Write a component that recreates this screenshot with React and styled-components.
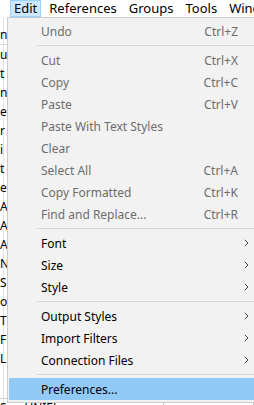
import React from 'react';
import styled, { createGlobalStyle } from 'styled-components';

const GlobalStyle = createGlobalStyle`
  html, body {
    margin: 0;
    padding: 0;
    background: #ffffff;
  }

  body {
    font-family: "Noto Sans", "Noto Sans CJK SC", sans-serif;
    font-size: 12px;
    color: #000000;
  }
`;

const Page = styled.div`
  width: 254px;
  height: 405px;
  overflow: hidden;
  display: flex;
  flex-direction: column;
  background: #ffffff;
`;

const MenuBar = styled.div`
  display: flex;
  align-items: stretch;
  gap: 4px;
  height: 17px;
  padding-left: 10px;
  flex-shrink: 0;
  white-space: nowrap;
  font-size: 13px;
`;

const BarItem = styled.div`
  display: flex;
  align-items: center;
  padding: 0 3px;
  border: 1px solid ${({ active }) => (active ? '#99d1ff' : 'transparent')};
  background: ${({ active }) => (active ? '#cce8ff' : 'transparent')};
  line-height: 15px;
`;

const Workspace = styled.div`
  position: relative;
  flex: 1;
  overflow: hidden;
`;

const BgList = styled.div`
  display: flex;
  flex-direction: column;
  padding-top: 8px;
  border-left: 1px solid #e2e2e2;
  margin-left: 3px;
`;

const BgRow = styled.div`
  height: 19px;
  line-height: 19px;
  margin-left: -4px;
  white-space: nowrap;
  border-bottom: ${({ ruled }) => (ruled ? '1px solid #dadada' : 'none')};
`;

const BgFooter = styled.div`
  display: flex;
  margin-top: 30px;
  border-top: 1px solid #cfcfcf;
  height: 19px;
  line-height: 17px;
  margin-left: -4px;
`;

const FooterCell = styled.div`
  width: ${({ w }) => w}px;
  border-right: 1px solid #bdbdbd;
  white-space: nowrap;
  overflow: hidden;
`;

const Dropdown = styled.div`
  position: absolute;
  top: 0;
  left: 7px;
  width: 270px;
  padding: 2px 1px;
  background: #f2f2f2;
  border: 1px solid #cccccc;
  display: flex;
  flex-direction: column;
`;

const Row = styled.div`
  display: grid;
  grid-template-columns: 1fr auto 11px;
  align-items: center;
  height: 22px;
  padding: 0 30px 0 32px;
  color: ${({ disabled }) => (disabled ? '#6d6d6d' : '#000000')};
  background: ${({ hovered }) => (hovered ? '#91c9f7' : 'transparent')};
  white-space: nowrap;
`;

const Shortcut = styled.span`
  text-align: right;
`;

const Arrow = styled.span`
  display: flex;
  justify-content: flex-end;
  align-items: center;
`;

const Separator = styled.div`
  height: 1px;
  margin: 3px 0 3px 28px;
  background: #d7d7d7;
`;

const Chevron = () => (
  <svg width="5" height="8" viewBox="0 0 5 8">
    <path d="M0.8 0.8 L4 4 L0.8 7.2" fill="none" stroke="#444" strokeWidth="1" />
  </svg>
);

const menu = [
  { label: 'Undo', keys: 'Ctrl+Z', disabled: true },
  'sep',
  { label: 'Cut', keys: 'Ctrl+X', disabled: true },
  { label: 'Copy', keys: 'Ctrl+C', disabled: true },
  { label: 'Paste', keys: 'Ctrl+V', disabled: true },
  { label: 'Paste With Text Styles', disabled: true },
  { label: 'Clear', disabled: true },
  { label: 'Select All', keys: 'Ctrl+A', disabled: true },
  { label: 'Copy Formatted', keys: 'Ctrl+K', disabled: true },
  { label: 'Find and Replace...', keys: 'Ctrl+R', disabled: true },
  'sep',
  { label: 'Font', sub: true },
  { label: 'Size', sub: true },
  { label: 'Style', sub: true },
  'sep',
  { label: 'Output Styles', sub: true },
  { label: 'Import Filters', sub: true },
  { label: 'Connection Files', sub: true },
  'sep',
  { label: 'Preferences...', hovered: true },
];

const bgFragments = [
  'n', 'u', 't', 'n', 'e', 'r', 'i', 't', 'e', 'A', 'A', 'A',
  'N', 'S', 'o', 'T', 'F', 'L',
];

const App = () => (
  <>
    <GlobalStyle />
    <Page>
      <MenuBar>
        <BarItem active>Edit</BarItem>
        <BarItem>References</BarItem>
        <BarItem>Groups</BarItem>
        <BarItem>Tools</BarItem>
        <BarItem>Window</BarItem>
      </MenuBar>
      <Workspace>
        <BgList>
          {bgFragments.map((t, i) => (
            <BgRow key={i} ruled={i === 0}>{t}</BgRow>
          ))}
          <BgFooter>
            <FooterCell w={165}>Sou UNIEL</FooterCell>
            <FooterCell w={90} />
          </BgFooter>
        </BgList>
        <Dropdown>
          {menu.map((item, i) => (item === 'sep' ? (
            <Separator key={i} />
          ) : (
            <Row key={i} disabled={item.disabled} hovered={item.hovered}>
              <span>{item.label}</span>
              <Shortcut>{item.keys}</Shortcut>
              <Arrow>{item.sub && <Chevron />}</Arrow>
            </Row>
          )))}
        </Dropdown>
      </Workspace>
    </Page>
  </>
);

export default App;
